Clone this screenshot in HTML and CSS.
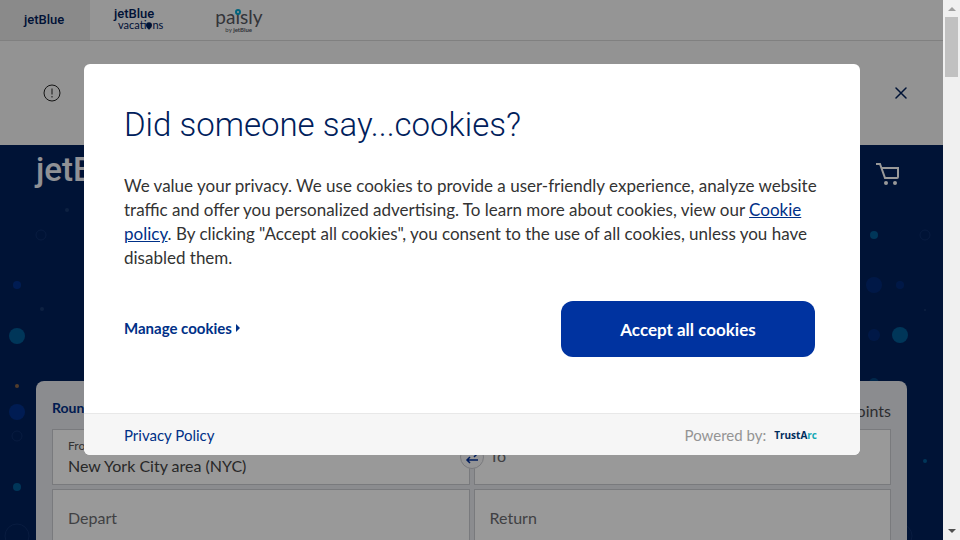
FILE: index.html
```html
<!DOCTYPE html>
<html lang="en">
<head>
<meta charset="utf-8">
<meta name="viewport" content="width=device-width, initial-scale=1">
<title>jetBlue</title>
<link rel="stylesheet" href="styles.css">
</head>
<body>
<div class="viewport">
  <div class="page">
    <nav class="brands">
      <a class="brand brand-active" href="#"><span class="logo">jetBlue</span></a>
      <a class="brand brand-vacations" href="#">
        <span class="logo">jetBlue</span>
        <span class="vacations">vacati<svg class="pin" viewBox="0 0 8 10"><path d="M4 0a4 4 0 0 1 4 4c0 3-4 6-4 6S0 7 0 4a4 4 0 0 1 4-4Z"/></svg>ns</span>
      </a>
      <a class="brand brand-paisly" href="#">
        <span class="paisly">pa<span class="paisly-i">ı<svg class="paisly-dot" viewBox="0 0 6 7"><circle cx="3" cy="3" r="2"/></svg></span>sly</span>
        <span class="by">by <b>jetBlue</b></span>
      </a>
    </nav>
    <section class="notice">
      <svg class="alert-icon" viewBox="0 0 18 18"><circle cx="9" cy="9" r="8"/><path d="M9 4.500v6M9 12v1.500"/></svg>
      <button class="close" aria-label="Close"><svg viewBox="0 0 12 12"><path d="M1 1l10 10M11 1l-10 10"/></svg></button>
    </section>
    <main class="hero">
      <svg class="dots dots-left" viewBox="0 0 84 395">
        <circle class="faint" cx="67" cy="65" r="2"/>
        <circle class="ring" cx="41" cy="90" r="5"/>
        <circle class="blue" cx="17" cy="140" r="4"/>
        <circle class="faint" cx="42" cy="164" r="2"/>
        <circle class="teal" cx="17" cy="191" r="8"/>
        <circle class="orange" cx="17" cy="241" r="2"/>
        <circle class="blue" cx="17" cy="267" r="8"/>
        <circle class="ring" cx="17" cy="291" r="5"/>
        <circle class="teal" cx="17" cy="342" r="4"/>
        <circle class="ring" cx="17" cy="391" r="12"/>
      </svg>
      <svg class="dots dots-right" viewBox="0 0 84 395">
        <circle class="teal" cx="15" cy="90" r="4"/>
        <circle class="ring" cx="66" cy="90" r="5"/>
        <circle class="blue dim" cx="15" cy="140" r="8"/>
        <circle class="blue dim" cx="41" cy="140" r="4"/>
        <circle class="faint" cx="66" cy="165" r="1"/>
        <circle class="blue dim" cx="15" cy="190" r="6"/>
        <circle class="teal" cx="41" cy="190" r="8"/>
        <circle class="teal dim" cx="15" cy="238" r="5"/>
        <circle class="teal" cx="66" cy="316" r="2"/>
        <circle class="ring" cx="41" cy="391" r="12"/>
      </svg>
      <header class="site-header">
        <a class="site-logo" href="#">jetBlue</a>
        <a class="cart" href="#" aria-label="Cart"><svg viewBox="0 0 24 24"><path d="M0 2h4l5 14h12M5.500 6h16.500v9q0 1-1 1"/><circle cx="10" cy="21" r="2"/><circle cx="19" cy="21" r="2"/></svg></a>
      </header>
      <form class="booking">
        <div class="options"><b>Roundtrip</b><span>Use points</span></div>
        <div class="fields">
          <div class="field filled"><label for="from">From</label><input id="from" value="New York City area (NYC)"></div>
          <div class="field"><input id="to" aria-label="To" placeholder="To"></div>
          <div class="field tall"><input id="depart" aria-label="Depart" placeholder="Depart"></div>
          <div class="field tall"><input id="return" aria-label="Return" placeholder="Return"></div>
          <button class="swap" type="button" aria-label="Swap"><svg viewBox="0 0 14 14"><path d="M1 4h11M9 1l3 3-3 3M13 10H2M5 7l-3 3 3 3"/></svg></button>
        </div>
      </form>
    </main>
    <div class="overlay">
      <div class="dialog" role="dialog" aria-labelledby="title">
        <div class="dialog-body">
          <h1 id="title">Did someone say...cookies?</h1>
          <p>We value your privacy. We use cookies to provide a user-friendly experience, analyze website traffic and offer you personalized advertising. To learn more about cookies, view our <a href="#">Cookie policy</a>. By clicking "Accept all cookies", you consent to the use of all cookies, unless you have disabled them.</p>
          <div class="actions">
            <a class="manage" href="#">Manage cookies<svg viewBox="0 0 4 8"><path d="M0 0l4 4-4 4Z"/></svg></a>
            <button class="accept">Accept all cookies</button>
          </div>
        </div>
        <footer class="dialog-footer">
          <a href="#">Privacy Policy</a>
          <span class="powered">Powered by: <span class="trust">TrustA<span>rc</span></span></span>
        </footer>
      </div>
    </div>
  </div>
  <div class="scrollbar" aria-hidden="true">
    <svg viewBox="0 0 8 4"><path class="up" d="M0 4l4-4 4 4Z"/></svg>
    <div class="thumb"></div>
    <svg class="down" viewBox="0 0 8 4"><path d="M0 0l4 4 4-4Z"/></svg>
  </div>
</div>
</body>
</html>
```
FILE: styles.css
```css
* { box-sizing: border-box; }
body { margin: 0; font-family: Lato, "Liberation Sans", sans-serif; font-size: 16px; color: #333; }
a { color: #003087; text-decoration: none; }
button { padding: 0; border: 0; background: none; font: inherit; }
svg { display: block; }

.viewport { display: grid; grid-template-columns: 1fr 17px; height: 100vh; overflow: hidden; }
.page { position: relative; display: flex; flex-direction: column; min-width: 0; overflow: hidden; }

.brands { display: flex; flex: none; height: 41px; background: #f8f8f8; border-bottom: 1px solid #d5d5d5; }
.brand { display: flex; flex-direction: column; justify-content: center; padding: 0 24px; color: #00205b; }
.brand-active { width: 90px; background: #e7e7e7; }
.logo { font: 500 13px/16px Roboto, sans-serif; }
.brand-vacations .logo { line-height: 10px; }
.vacations { display: flex; align-items: center; padding-left: 4px; font-size: 11px; line-height: 12px; }
.pin { width: 6px; height: 8px; margin-top: 2px; fill: #00205b; }
.brand-paisly { padding-left: 28px; color: #55575f; }
.paisly { font: 19px/20px Lato, sans-serif; }
.paisly-i { position: relative; }
.paisly-dot { position: absolute; top: 4px; left: 0; width: 6px; height: 7px; fill: none; stroke: #00a5d0; stroke-width: 2; }
.by { padding-left: 10px; font-size: 6px; line-height: 6px; }

.notice { display: flex; flex: none; justify-content: space-between; align-items: center; height: 104px; padding: 0 36px 0 43px; background: #f6f6f6; }
.alert-icon { width: 18px; height: 18px; fill: none; stroke: #222; stroke-width: 1; }
.close svg { width: 12px; height: 12px; fill: none; stroke: #00205b; stroke-width: 1.500; stroke-linecap: round; }

.hero { position: relative; flex: 1 0 auto; background: #00205b; }
.dots { position: absolute; top: 0; width: 84px; height: 395px; }
.dots-left { left: 0; }
.dots-right { right: 0; }
.ring { fill: none; stroke: #0f2f6b; }
.faint { fill: #17376d; }
.blue { fill: #00308a; }
.teal { fill: #005a94; }
.orange { fill: #8a6648; }
.dim { opacity: .6; }
.site-header { position: relative; display: flex; justify-content: space-between; height: 236px; padding: 8px 43px 0 36px; }
.site-logo { font: 500 33px/34px Roboto, sans-serif; color: #f0f2f8; }
.cart svg { width: 24px; height: 24px; margin-top: 9px; fill: none; stroke: #fff; stroke-width: 2; }
.cart circle { fill: #fff; stroke: none; }

.booking { position: relative; margin: 0 36px; padding: 16px 16px 0; border-radius: 8px 8px 0 0; background: #e8e9ee; }
.options { display: flex; justify-content: space-between; align-items: center; height: 24px; margin-bottom: 8px; color: #4b4c50; }
.options span { padding-top: 3px; }
.options b { padding-bottom: 3px; font-size: 14px; color: #003087; }
.fields { position: relative; display: grid; grid-template-columns: 1fr 1fr; gap: 4px; }
.field { display: flex; flex-direction: column; justify-content: center; height: 56px; padding: 0 15px 2px; border: 1px solid #cacbd1; background: #fff; }
.tall { height: 60px; }
.field label { font-size: 12px; line-height: 16px; padding-top: 3px; color: #555; }
.field input { width: 100%; padding: 0; border: 0; background: none; font: 16px/24px Lato, sans-serif; color: #444; }
.field input::placeholder { color: #6b6c70; opacity: 1; }
.swap { position: absolute; top: 16px; left: calc(50% - 12px); display: grid; place-items: center; width: 24px; height: 24px; border: 1px solid #cacbd1; border-radius: 50%; background: #f8f8fa; }
.swap svg { width: 14px; height: 14px; fill: none; stroke: #00309b; stroke-width: 1.500; }

.overlay { position: absolute; inset: 0; display: flex; align-items: flex-start; padding: 64px 83px 0 84px; background: rgba(0, 0, 0, .4); }
.dialog { flex: 1; overflow: hidden; border-radius: 6px; background: #fff; }
.dialog-body { padding: 40px 40px 56px; }
h1 { margin: 0 0 28px; font: 300 33px/42px Roboto, sans-serif; color: #00205b; }
p { margin: 0 0 31px; font-size: 17px; line-height: 24px; }
p a { text-decoration: underline; }
.actions { display: flex; justify-content: space-between; align-items: center; padding-right: 5px; }
.manage { display: flex; align-items: center; gap: 4px; padding-bottom: 3px; font-size: 15px; font-weight: 700; }
.manage svg { width: 4px; height: 8px; fill: #003087; }
.accept { width: 254px; height: 56px; border-radius: 12px; background: #0033a0; color: #fff; font-size: 17px; font-weight: 700; }
.dialog-footer { display: flex; justify-content: space-between; align-items: center; height: 42px; padding: 1px 43px 0 40px; border-top: 1px solid #e8e8e8; background: #f6f6f6; font-size: 15px; }
.powered { display: flex; align-items: center; gap: 8px; color: #949494; }
.trust { font: 700 10px/16px "Open Sans", sans-serif; color: #002d5c; }
.trust span { color: #13a9b5; }

.scrollbar { display: flex; flex-direction: column; align-items: center; padding: 7px 0; background: #f0f0f0; }
.scrollbar svg { width: 8px; height: 4px; fill: #505050; }
.scrollbar .up { fill: #a0a0a0; }
.thumb { width: 13px; height: 60px; margin-top: 6px; background: #c1c1c1; }
.down { margin-top: auto; }
```
